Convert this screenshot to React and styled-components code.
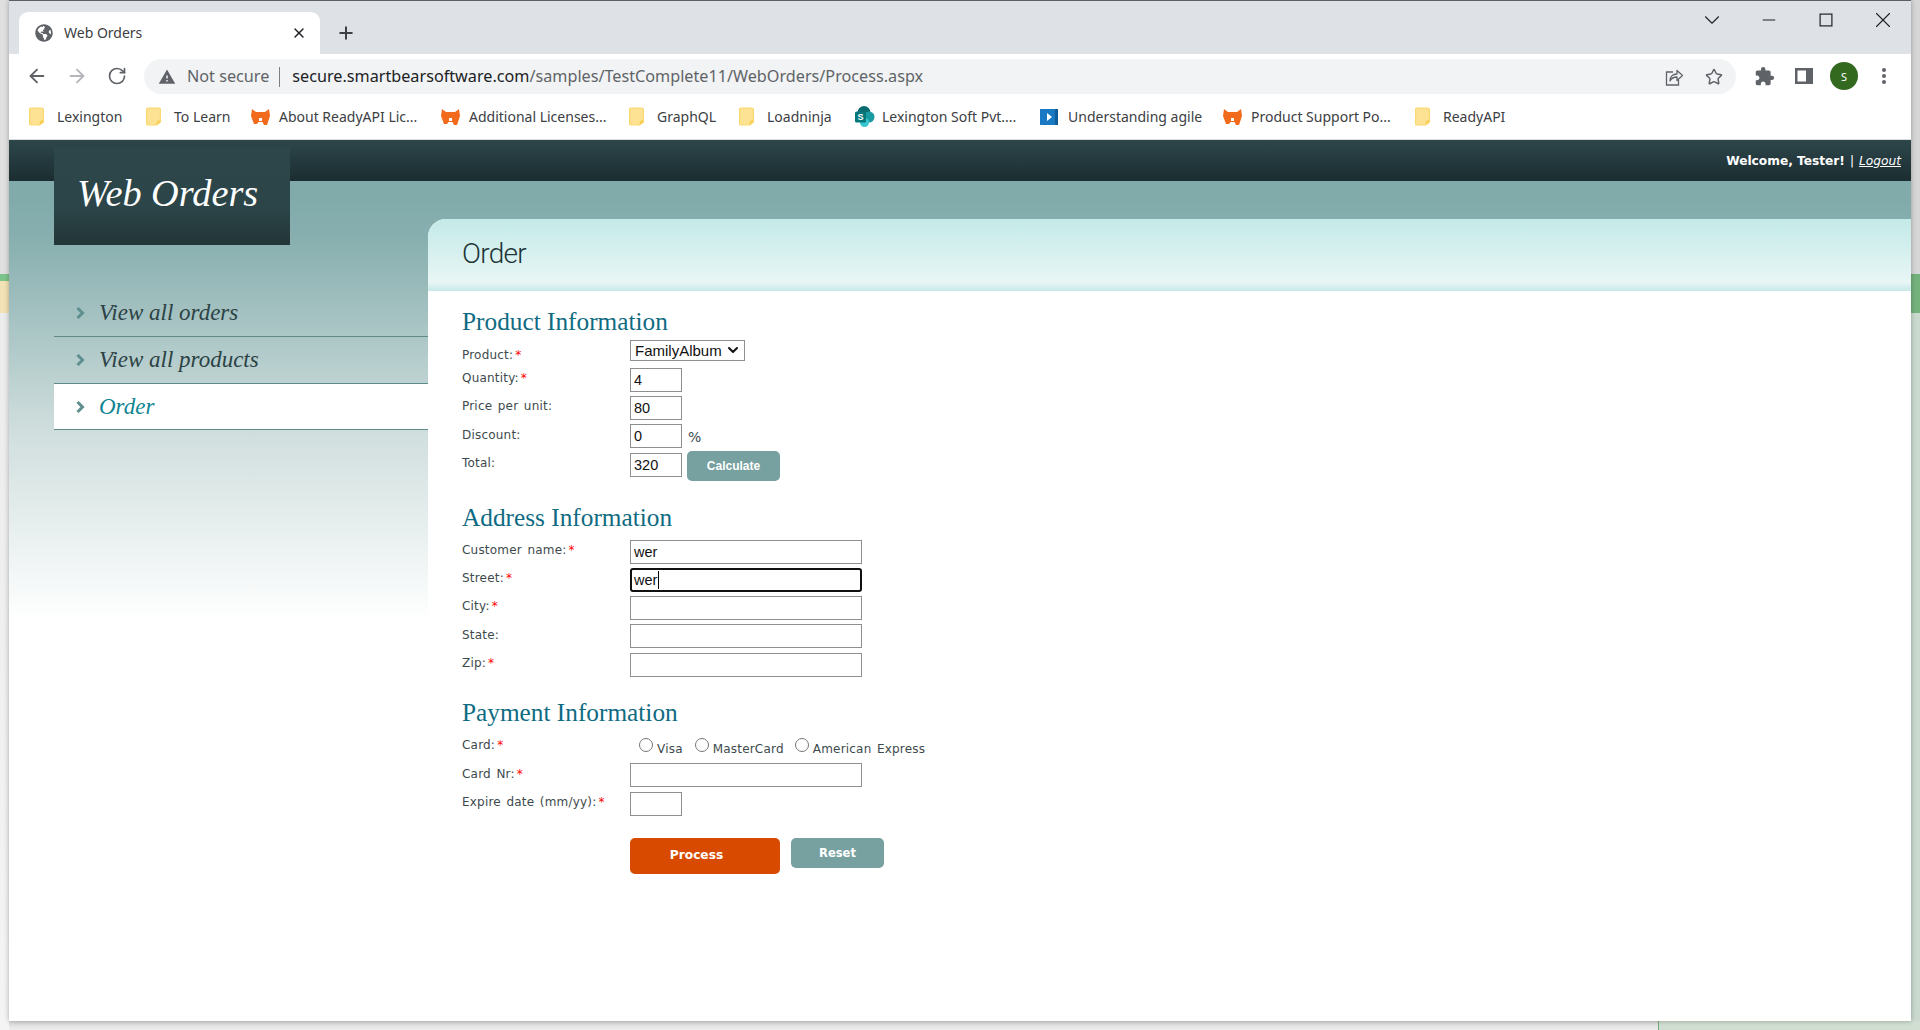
import React from 'react';
import styled, { createGlobalStyle } from 'styled-components';
import { ArrowLeft, ArrowRight, RotateCw, Star, X, Plus, ChevronDown, Minus } from 'lucide-react';
import { FaGlobeAmericas } from 'react-icons/fa';
import { MdExtension, MdWarning } from 'react-icons/md';

const Global = createGlobalStyle`
  html, body { margin: 0; padding: 0; width: 1920px; height: 1030px; overflow: hidden; }
  * { box-sizing: border-box; }
`;

const UI = '"Noto Sans", "Open Sans", sans-serif';
const SERIF = '"Liberation Serif", "DejaVu Serif", serif';
const VERD = '"DejaVu Sans", Verdana, sans-serif';

const Desktop = styled.div`
  width: 1920px;
  height: 1030px;
  padding: 0 9px 9px 9px;
  background:
    linear-gradient(#7dc48c, #7dc48c) 0 274px / 9px 7px no-repeat,
    linear-gradient(#f3e2b5, #f3e2b5) 0 281px / 9px 32px no-repeat,
    linear-gradient(#ececec, #f4f4f4) 0 313px / 9px 717px no-repeat,
    linear-gradient(#e0e0e0, #e0e0e0) 0 0 / 9px 274px no-repeat,
    linear-gradient(#74b27c, #74b27c) 1911px 274px / 9px 39px no-repeat,
    linear-gradient(#d6d6d6, #d6d6d6) 1911px 0 / 9px 274px no-repeat,
    linear-gradient(#6fa877, #6fa877) 1658px 1021px / 1px 9px no-repeat,
    linear-gradient(#d0dfd2, #d0dfd2) 1659px 1021px / 261px 9px no-repeat,
    linear-gradient(#cbdace, #cbdace) 1911px 313px / 9px 717px no-repeat,
    linear-gradient(#d8d8d8, #eeeeee) 0 1021px / 1658px 9px no-repeat,
    #ececec;
`;

const Win = styled.div`
  width: 1902px;
  height: 1021px;
  display: flex;
  flex-direction: column;
  background: #fff;
  border-top: 1px solid #5c5f63;
  box-shadow: 0 0 5px rgba(0, 0, 0, 0.3);
  font-family: ${UI};
`;

const TabStrip = styled.div`
  height: 53px;
  flex: none;
  display: flex;
  align-items: flex-end;
  background: #dee1e6;
  padding-left: 10px;
`;

const Tab = styled.div`
  width: 301px;
  height: 42px;
  display: flex;
  align-items: center;
  background: #fff;
  border-radius: 9px 9px 0 0;
  padding: 0 13px 0 16px;
  gap: 11px;
  color: #3c4043;
  font-size: 14px;
`;

const TabTitle = styled.span`
  flex: 1;
  margin-top: -2px;
`;

const NewTab = styled.div`
  width: 50px;
  height: 42px;
  padding-left: 2px;
  display: flex;
  align-items: center;
  justify-content: center;
  color: #3c4043;
`;

const WinControls = styled.div`
  margin-left: auto;
  align-self: flex-start;
  display: flex;
`;

const WinBtn = styled.div`
  width: 57px;
  height: 38px;
  display: flex;
  align-items: center;
  justify-content: center;
  color: #202124;
`;

const Toolbar = styled.div`
  height: 40px;
  flex: none;
  display: flex;
  align-items: flex-end;
  padding: 0 7px 0 8px;
`;

const NavBtn = styled.div`
  width: 40px;
  height: 36px;
  flex: none;
  display: flex;
  align-items: center;
  justify-content: center;
  color: ${p => (p.$dim ? '#b4b6b9' : '#5f6368')};
`;

const AddressBar = styled.div`
  flex: 1;
  height: 35px;
  margin: 0 8px 0 7px;
  border-radius: 18px;
  background: #f1f3f4;
  display: flex;
  align-items: center;
  padding: 0 2px 0 14px;
  font-size: 16.2px;
  color: #5f6368;
`;

const NotSecure = styled.span`
  margin: -2px 0 0 11px;
`;

const Sep = styled.span`
  width: 1px;
  height: 20px;
  background: #7b7e82;
  margin: 0 12px 0 10px;
`;

const Url = styled.span`
  margin-top: -2px;
`;

const Host = styled.span`
  color: #202124;
`;

const Spacer = styled.div`
  flex: 1;
`;

const Avatar = styled.div`
  width: 28px;
  height: 28px;
  border-radius: 50%;
  background: #33691e;
  color: #fff;
  font-size: 11px;
  display: flex;
  align-items: center;
  justify-content: center;
`;

const Bookmarks = styled.div`
  height: 46px;
  flex: none;
  display: flex;
  align-items: center;
  padding-left: 20px;
  border-bottom: 1px solid #dadce0;
`;

const Bookmark = styled.div`
  flex: none;
  display: flex;
  align-items: center;
  font-size: 14px;
  color: #3c4043;
  white-space: nowrap;
`;

const BookmarkIcon = styled.span`
  width: 28px;
  flex: none;
  display: flex;
`;

const Page = styled.div`
  position: relative;
  flex: 1;
  display: flex;
  flex-direction: column;
  min-height: 0;
  background: linear-gradient(#81abab 60px, #8ab0b0 105px, #cfdedd 290px, #ffffff 482px);
`;

const TopBar = styled.div`
  height: 41px;
  flex: none;
  display: flex;
  align-items: center;
  justify-content: flex-end;
  padding: 1px 10px 0 0;
  background: linear-gradient(#2d464a, #1c2d31);
  color: #fff;
  font: 12.2px ${VERD};
`;

const Welcome = styled.b`
  margin-right: 5px;
`;

const Logout = styled.a`
  margin-left: 5px;
  color: #fff;
  font-style: italic;
  text-decoration: underline;
`;

const Logo = styled.div`
  position: absolute;
  left: 45px;
  top: 7px;
  width: 236px;
  height: 98px;
  padding: 21px 0 0 23px;
  background: linear-gradient(#2d464a, #2c4549 60%, #233638);
  color: #fff;
  font: italic 38.3px/50px ${SERIF};
`;

const Columns = styled.div`
  flex: 1;
  min-height: 0;
  display: flex;
`;

const Sidebar = styled.nav`
  width: 419px;
  flex: none;
  padding: 109.5px 0 0 45px;
`;

const NavItem = styled.a`
  height: 46.67px;
  display: flex;
  align-items: center;
  padding-left: 22px;
  gap: 14px;
  border-bottom: 1.4px solid #5f8a8a;
  background: ${p => (p.$active ? '#fff' : 'transparent')};
  color: ${p => (p.$active ? '#0e8593' : '#2c4245')};
  font: italic 23px ${SERIF};
`;

const Main = styled.main`
  flex: 1;
  margin-top: 38px;
  background: #fff;
  border-top-left-radius: 18px;
  overflow: hidden;
`;

const MainHead = styled.header`
  height: 72px;
  padding: 0 0 3px 34px;
  display: flex;
  align-items: center;
  background: linear-gradient(#c3eae8 0, #e8f6f5 88%, #c6e9e7 100%);
  color: #1e3437;
  letter-spacing: -0.7px;
  font: 300 28px Roboto, sans-serif;
`;

const Form = styled.form`
  padding: 17px 0 0 34px;
`;

const Section = styled.section`
  margin-bottom: ${p => p.$after}px;
`;

const Heading = styled.h2`
  margin: 0 0 ${p => p.$gap}px;
  height: 30px;
  color: #0f6b82;
  font: 400 25.3px/26px ${SERIF};
`;

const Row = styled.div`
  height: ${p => p.$h || 28}px;
  display: flex;
  align-items: flex-start;
`;

const Label = styled.label`
  width: 168px;
  flex: none;
  padding-top: ${p => p.$top ?? 3}px;
  color: #3d4a4d;
  letter-spacing: 0.2px;
  word-spacing: 1.5px;
  font: 12px/16px ${VERD};
`;

const Req = styled.span`
  color: #f00;
  margin-left: 2px;
`;

const Field = styled.span`
  position: relative;
  display: flex;
  align-items: flex-start;
`;

const TextInput = styled.input`
  width: ${p => p.$w}px;
  height: 24px;
  padding: 0 3px;
  margin: ${p => p.$mt || 0}px 0 0;
  background: #fff;
  color: #111;
  font: 14.5px "Liberation Sans", Arial, sans-serif;
  border: ${p => (p.$focus ? '2px solid #101010' : '1px solid #8f8f8f')};
  border-radius: ${p => (p.$focus ? '3px' : '0')};
  outline: none;
  padding-left: ${p => (p.$focus ? '2px' : '3px')};
`;

const Caret = styled.span`
  position: absolute;
  left: 28px;
  top: 3px;
  width: 1px;
  height: 18px;
  background: #000;
`;

const Select = styled.select`
  width: 115px;
  height: 21px;
  padding: 0 0 0 4px;
  appearance: none;
  background: #fff;
  color: #111;
  border: 1px solid #8f8f8f;
  font: 15px "Liberation Sans", Arial, sans-serif;
`;

const SelectArrow = styled.span`
  position: absolute;
  left: 95px;
  top: 2px;
  display: flex;
  color: #111;
  pointer-events: none;
`;

const Percent = styled.span`
  margin: 5px 0 0 6px;
  color: #3d4a4d;
  font: 14px ${VERD};
`;

const Btn = styled.button`
  width: ${p => p.$w}px;
  height: ${p => p.$h}px;
  margin-left: ${p => p.$ml || 0}px;
  border: none;
  border-radius: 5px;
  background: ${p => p.$bg};
  color: #fff;
  padding: ${p => p.$pad || '0'};
  font: bold ${p => p.$fs || 12}px ${p => p.$font || VERD};
`;

const RadioGroup = styled.div`
  display: flex;
  padding: 3px 0 0 9px;
  color: #3d4a4d;
  letter-spacing: 0.2px;
  word-spacing: 1.5px;
  font: 12px/16px ${VERD};
`;

const RadioOption = styled.label`
  display: flex;
  align-items: flex-start;
  margin-right: ${p => p.$mr}px;
  white-space: nowrap;
`;

const Radio = styled.input`
  width: 14px;
  height: 14px;
  margin: 0 4px 0 0;
  flex: none;
`;

const RadioText = styled.span`
  margin-top: 3px;
`;

const Folder = () => (
  <svg width="15" height="19" viewBox="0 0 12 19" preserveAspectRatio="none">
    <path d="M1.500 1h8.500c1 0 1.500.5 1.500 1.500V15l-3 3H1.500C1 18 .5 17.500.5 17V2C.5 1.500 1 1 1.500 1z" fill="#fde293" stroke="#fbd86f" strokeWidth="1" />
    <path d="M11.500 13v2.500l-3 2.500v-3c0-1 1-2 3-2z" fill="#f9cf58" />
  </svg>
);

const Bear = () => (
  <svg width="19" height="16" viewBox="0 0 19 16">
    <path d="M1 0l4 3h9l4-3 1 7-3 9h-3l-1.500-3h-4L6 15H3L0 7z" fill="#f26b1d" />
    <path d="M8 9h3v3H8z" fill="#fff" />
  </svg>
);

const SharePoint = () => (
  <svg width="22" height="22" viewBox="0 0 22 22">
    <circle cx="10" cy="6.500" r="6.500" fill="#0a6b70" />
    <circle cx="15" cy="11" r="5.500" fill="#1a9ba1" />
    <circle cx="10.500" cy="16.500" r="4.500" fill="#37c6d0" />
    <rect x="1" y="5.500" width="11" height="11" rx="1.500" fill="#03787c" />
    <text x="6.500" y="14" textAnchor="middle" fontSize="9" fontWeight="700" fill="#fff" fontFamily="Liberation Sans">S</text>
  </svg>
);

const PlayTile = () => (
  <svg width="18" height="18" viewBox="0 0 18 18">
    <rect width="18" height="16" y="1" fill="#1979c3" />
    <path d="M7 5l5 4-5 4z" fill="#fff" />
    <rect width="3" height="16" y="1" x="15" fill="#0f5c99" />
  </svg>
);

const Share = () => (
  <svg width="20" height="20" viewBox="0 0 20 20" fill="none" stroke="#5f6368" strokeWidth="1.3">
    <path d="M9 5H2.500v13h12v-5" />
    <path d="M6 14c0-5 3-7 7-7V3.500l5.500 5-5.500 5V10c-3 0-5.500 1-7 4z" strokeLinejoin="round" />
  </svg>
);

const SidePanel = () => (
  <svg width="20" height="20" viewBox="0 0 20 20">
    <path d="M1 2h18v16H1z M3.500 4.500v11h8.500v-11z" fill="#5f6368" fillRule="evenodd" />
  </svg>
);

const Dots = () => (
  <svg width="6" height="18" viewBox="0 0 6 18" fill="#5f6368">
    <circle cx="3" cy="3" r="2" />
    <circle cx="3" cy="9" r="2" />
    <circle cx="3" cy="15" r="2" />
  </svg>
);

const Maximize = () => (
  <svg width="14" height="14" viewBox="0 0 14 14" fill="none" stroke="#202124" strokeWidth="1.2">
    <rect x="1.100" y="1.100" width="11.800" height="11.800" />
  </svg>
);

const Chev = () => (
  <svg width="9" height="12" viewBox="0 0 9 12" fill="none" stroke="#5f8f8f" strokeWidth="3">
    <path d="M1.500 1l5 5-5 5" />
  </svg>
);

const bookmarks = [
  ['Lexington', <Folder />, 117],
  ['To Learn', <Folder />, 105],
  ['About ReadyAPI Lic...', <Bear />, 190],
  ['Additional Licenses...', <Bear />, 188],
  ['GraphQL', <Folder />, 110],
  ['Loadninja', <Folder />, 115],
  ['Lexington Soft Pvt....', <SharePoint />, 186],
  ['Understanding agile', <PlayTile />, 183],
  ['Product Support Po...', <Bear />, 192],
  ['ReadyAPI', <Folder />, 100],
];

const Field2 = ({ label, req, top, w = 232, value, focus, h }) => (
  <Row $h={h}>
    <Label $top={top}>{label}{req && <Req>*</Req>}</Label>
    <Field>
      <TextInput $w={w} $focus={focus} defaultValue={value} readOnly />
      {focus && <Caret />}
    </Field>
  </Row>
);

export default function App() {
  return (
    <Desktop>
      <Global />
      <Win>
        <TabStrip>
          <Tab>
            <FaGlobeAmericas size={18} color="#5f6368" />
            <TabTitle>Web Orders</TabTitle>
            <X size={16} color="#202124" strokeWidth={2.2} />
          </Tab>
          <NewTab><Plus size={20} strokeWidth={2.4} /></NewTab>
          <WinControls>
            <WinBtn><ChevronDown size={26} strokeWidth={1} /></WinBtn>
            <WinBtn><Minus size={20} strokeWidth={1.2} /></WinBtn>
            <WinBtn><Maximize /></WinBtn>
            <WinBtn><X size={26} strokeWidth={1} /></WinBtn>
          </WinControls>
        </TabStrip>
        <Toolbar>
          <NavBtn><ArrowLeft size={22} strokeWidth={2} /></NavBtn>
          <NavBtn $dim><ArrowRight size={22} strokeWidth={2} /></NavBtn>
          <NavBtn><RotateCw size={20} strokeWidth={2} /></NavBtn>
          <AddressBar>
            <MdWarning size={18} color="#5f6368" />
            <NotSecure>Not secure</NotSecure>
            <Sep />
            <Url><Host>secure.smartbearsoftware.com</Host>/samples/TestComplete11/WebOrders/Process.aspx</Url>
            <Spacer />
            <NavBtn><Share /></NavBtn>
            <NavBtn><Star size={18} strokeWidth={2} /></NavBtn>
          </AddressBar>
          <NavBtn><MdExtension size={21} /></NavBtn>
          <NavBtn><SidePanel /></NavBtn>
          <NavBtn><Avatar>S</Avatar></NavBtn>
          <NavBtn><Dots /></NavBtn>
        </Toolbar>
        <Bookmarks>
          {bookmarks.map(([t, icon, w]) => (
            <Bookmark key={t} style={{ width: w }}>
              <BookmarkIcon>{icon}</BookmarkIcon>
              {t}
            </Bookmark>
          ))}
        </Bookmarks>
        <Page>
          <TopBar>
            <Welcome>Welcome, Tester!</Welcome> | <Logout>Logout</Logout>
          </TopBar>
          <Logo>Web Orders</Logo>
          <Columns>
            <Sidebar>
              <NavItem><Chev />View all orders</NavItem>
              <NavItem><Chev />View all products</NavItem>
              <NavItem $active><Chev />Order</NavItem>
            </Sidebar>
            <Main>
              <MainHead>Order</MainHead>
              <Form>
                <Section $after={23}>
                  <Heading $gap={2}>Product Information</Heading>
                  <Row>
                    <Label $top={7}>Product:<Req>*</Req></Label>
                    <Field>
                      <Select defaultValue="FamilyAlbum"><option>FamilyAlbum</option></Select>
                      <SelectArrow><ChevronDown size={16} strokeWidth={3} /></SelectArrow>
                    </Field>
                  </Row>
                  <Field2 label="Quantity:" req top={2} w={52} value="4" />
                  <Field2 label="Price per unit:" top={2} w={52} value="80" />
                  <Row $h={27}>
                    <Label>Discount:</Label>
                    <TextInput $w={52} defaultValue="0" readOnly />
                    <Percent>%</Percent>
                  </Row>
                  <Row $h={30}>
                    <Label $top={4}>Total:</Label>
                    <TextInput $w={52} $mt={2} defaultValue="320" readOnly />
                    <Btn type="button" $w={93} $h={30} $ml={5} $bg="#77a0a0" $font={'"Liberation Sans", Arial, sans-serif'}>Calculate</Btn>
                  </Row>
                </Section>
                <Section $after={18}>
                  <Heading $gap={6}>Address Information</Heading>
                  <Field2 label="Customer name:" req top={2} value="wer" />
                  <Field2 label="Street:" req top={2} value="wer" focus />
                  <Field2 label="City:" req top={2} />
                  <Field2 label="State:" h={29} />
                  <Field2 label="Zip:" req top={2} />
                </Section>
                <Section $after={0}>
                  <Heading $gap={6}>Payment Information</Heading>
                  <Row>
                    <Label $top={2}>Card:<Req>*</Req></Label>
                    <RadioGroup>
                      <RadioOption $mr={12}><Radio type="radio" name="card" /><RadioText>Visa</RadioText></RadioOption>
                      <RadioOption $mr={11}><Radio type="radio" name="card" /><RadioText>MasterCard</RadioText></RadioOption>
                      <RadioOption $mr={0}><Radio type="radio" name="card" /><RadioText>American Express</RadioText></RadioOption>
                    </RadioGroup>
                  </Row>
                  <Field2 label="Card Nr:" req h={29} />
                  <Field2 label="Expire date (mm/yy):" req top={2} w={52} h={46} />
                  <Row>
                    <Label />
                    <Btn type="button" $w={150} $h={36} $bg="#d84a00" $fs={12.2} $pad="0 17px 3px 0">Process</Btn>
                    <Btn type="button" $w={93} $h={30} $ml={11} $bg="#77a0a0" $fs={11.5} $pad="0 0 1px">Reset</Btn>
                  </Row>
                </Section>
              </Form>
            </Main>
          </Columns>
        </Page>
      </Win>
    </Desktop>
  );
}
